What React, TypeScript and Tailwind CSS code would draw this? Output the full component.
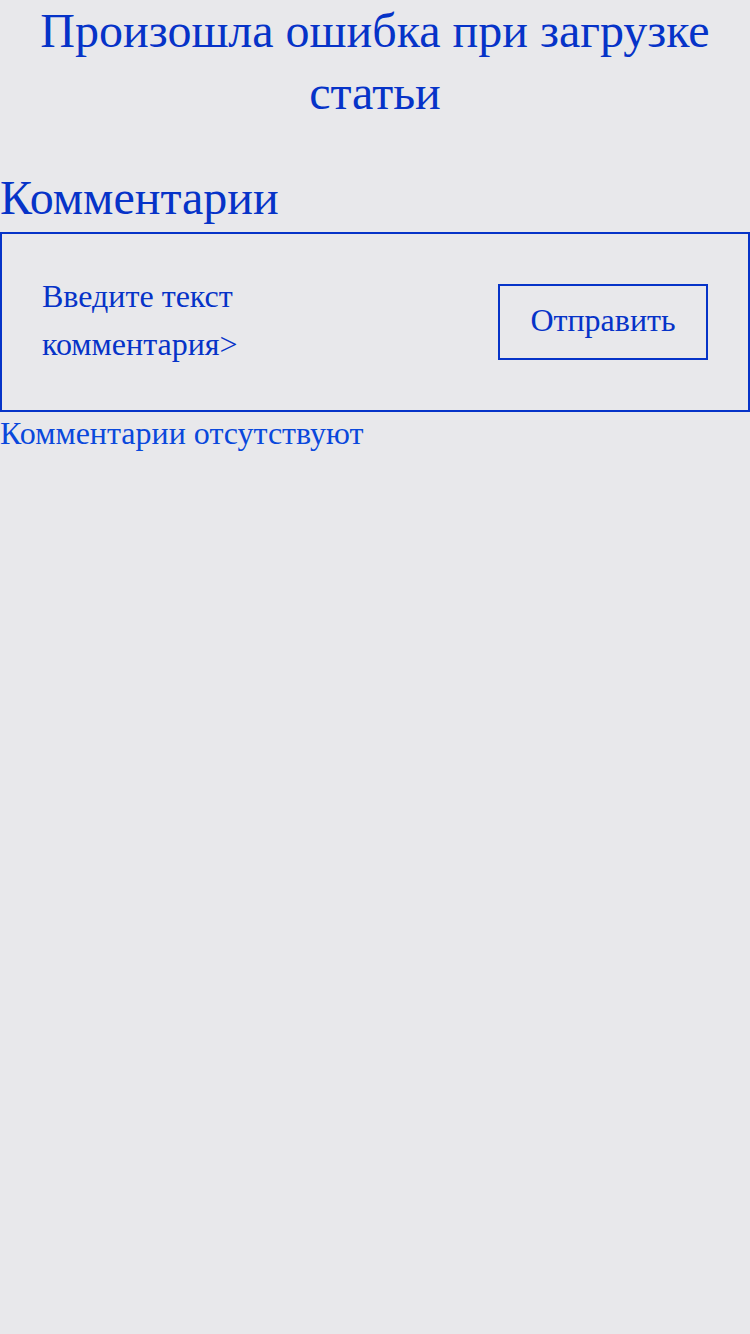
import React from "react";

export default function App() {
  return (
    <div className="min-h-[1334px] w-[750px] bg-[#e8e8eb] text-[#0633c8] [font-family:'Liberation_Serif',serif]">
      <h1 className="m-0 pb-[2px] text-center text-[48px] leading-[62px] font-normal">
        Произошла ошибка при загрузке статьи
      </h1>
      <h2 className="mt-[40px] text-[48px] leading-[64px] font-normal">Комментарии</h2>
      <div className="mt-[2px] flex h-[180px] items-center justify-between border-2 border-[#0633c8] px-[40px]">
        <div className="w-[260px] pb-[4px] text-[32px] leading-[48px]">Введите текст комментария&gt;</div>
        <button className="flex h-[76px] w-[210px] items-center justify-center border-2 border-[#0633c8] pb-[4px] text-[32px] leading-[34px]">
          Отправить
        </button>
      </div>
      <p className="mt-[4px] text-[32px] leading-[34px] text-[#0a48dc]">Комментарии отсутствуют</p>
    </div>
  );
}
